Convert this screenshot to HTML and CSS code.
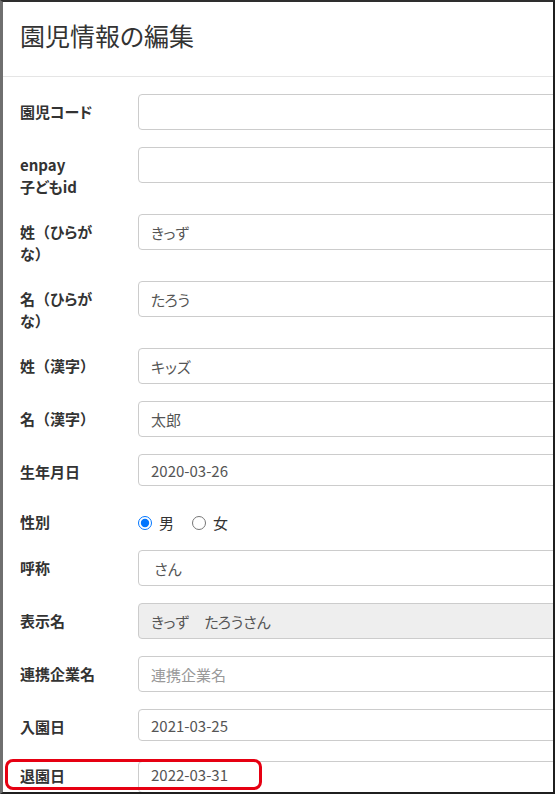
FILE: index.html
```html
<!DOCTYPE html>
<html lang="ja">
<head>
<meta charset="utf-8">
<title>園児情報の編集</title>
<link rel="stylesheet" href="styles.css">
</head>
<body>
<div class="frame">
  <div class="modal">
    <div class="modal-header">
      <h4 class="modal-title">園児情報の編集</h4>
    </div>
    <form class="modal-body">
      <div class="form-group">
        <label class="label">園児コード</label>
        <div class="field"><input class="ctl" type="text" value=""></div>
      </div>
      <div class="form-group">
        <label class="label">enpay<br>子どもid</label>
        <div class="field"><input class="ctl" type="text" value=""></div>
      </div>
      <div class="form-group">
        <label class="label"><span>姓</span><span class="paren">（</span><span>ひらが</span><span>な</span><span class="paren">）</span></label>
        <div class="field"><input class="ctl" type="text" value="きっず"></div>
      </div>
      <div class="form-group">
        <label class="label"><span>名</span><span class="paren">（</span><span>ひらが</span><span>な</span><span class="paren">）</span></label>
        <div class="field"><input class="ctl" type="text" value="たろう"></div>
      </div>
      <div class="form-group">
        <label class="label">姓<span class="paren">（</span>漢字<span class="paren">）</span></label>
        <div class="field"><input class="ctl" type="text" value="キッズ"></div>
      </div>
      <div class="form-group">
        <label class="label">名<span class="paren">（</span>漢字<span class="paren">）</span></label>
        <div class="field"><input class="ctl" type="text" value="太郎"></div>
      </div>
      <div class="form-group date-group">
        <label class="label">生年月日</label>
        <div class="field"><input class="ctl ctl-date" type="text" value="2020-03-26"></div>
      </div>
      <div class="form-group radio-group">
        <label class="label">性別</label>
        <div class="field radios">
          <label class="radio"><input type="radio" name="sex" checked><span>男</span></label>
          <label class="radio"><input type="radio" name="sex"><span>女</span></label>
        </div>
      </div>
      <div class="form-group">
        <label class="label">呼称</label>
        <div class="field"><input class="ctl" type="text" value=" さん"></div>
      </div>
      <div class="form-group">
        <label class="label">表示名</label>
        <div class="field"><input class="ctl" type="text" value="きっず　たろうさん" readonly></div>
      </div>
      <div class="form-group">
        <label class="label">連携企業名</label>
        <div class="field"><input class="ctl" type="text" placeholder="連携企業名"></div>
      </div>
      <div class="form-group date-group">
        <label class="label">入園日</label>
        <div class="field"><input class="ctl ctl-date" type="text" value="2021-03-25"></div>
      </div>
      <div class="form-group date-group last-group">
        <label class="label">退園日</label>
        <div class="field"><input class="ctl ctl-date" type="text" value="2022-03-31"></div>
      </div>
    </form>
  </div>
  <div class="highlight"></div>
</div>
</body>
</html>
```
FILE: styles.css
```css
* { box-sizing: border-box; }
html, body { margin: 0; padding: 0; background: #ffffff; }
body {
  font-family: "Noto Sans CJK JP", "Noto Sans", sans-serif;
  font-feature-settings: "palt";
  color: #333333;
}
.frame {
  position: relative;
  width: 555px;
  height: 794px;
  border-top: 2px solid #2e2e2e;
  border-left: 3px solid #6f6f6f;
  border-right: 2px solid #1f1f1f;
  border-bottom: 2px solid #1f1f1f;
  overflow: hidden;
  background: #ffffff;
}
.modal {
  width: 640px;
}
.modal-header {
  height: 75px;
  padding: 18px 17px 0;
  border-bottom: 1px solid #e5e5e5;
}
.modal-title {
  margin: 0;
  font-size: 25px;
  line-height: 30px;
  font-weight: 400;
  color: #333333;
}
.modal-body {
  margin: 0;
  padding: 17px 17px 0;
}
.form-group {
  display: grid;
  grid-template-columns: 78px 1fr;
  column-gap: 40px;
  align-items: start;
  margin-bottom: 17px;
}
.label {
  padding-top: 7px;
  margin-bottom: -1px;
  font-size: 15px;
  line-height: 22px;
  font-weight: 700;
  color: #333333;
}
.paren { font-feature-settings: normal; }
.ctl {
  display: block;
  width: 100%;
  height: 36px;
  padding: 0 12px;
  border: 1px solid #cccccc;
  border-radius: 4px;
  background: #ffffff;
  font-family: inherit;
  font-feature-settings: "palt";
  font-size: 15px;
  color: #555555;
  outline: none;
}
.ctl::placeholder { color: #999999; }
.ctl[readonly] { background: #eeeeee; }
.date-group { min-height: 35px; }
.ctl-date { height: 32px; }
.last-group .label { padding-top: 4px; }
.last-group .ctl-date { padding-bottom: 5px; }
.radio-group .label { padding-top: 5px; }
.radios {
  display: flex;
  align-items: center;
  gap: 18px;
  height: 27px;
  padding-top: 6px;
}
.radio {
  display: flex;
  align-items: center;
  gap: 7px;
  font-size: 15px;
  line-height: 22px;
  color: #333333;
}
.radio input {
  width: 14px;
  height: 14px;
  margin: 0;
  accent-color: #0075ff;
}
.highlight {
  position: absolute;
  left: 2px;
  top: 757px;
  width: 257px;
  height: 31px;
  border: 3px solid #e60012;
  border-radius: 8px;
}
```
